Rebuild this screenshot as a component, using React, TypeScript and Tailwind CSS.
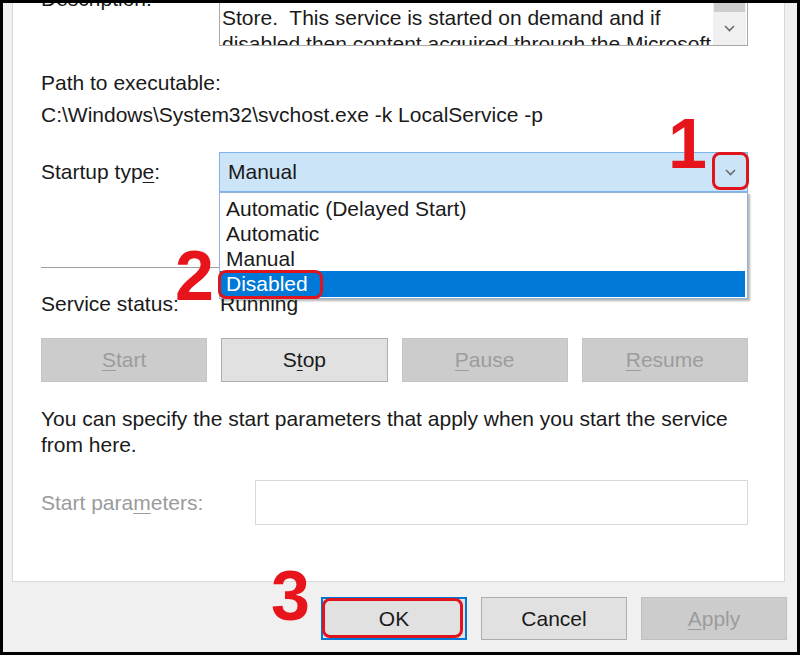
import React from 'react';

const Chevron = ({ className = '' }: { className?: string }) => (
  <svg width="11" height="7" viewBox="0 0 11 7" className={className}>
    <path d="M1 1 L5.5 5.5 L10 1" fill="none" stroke="#6b6b6b" strokeWidth="1.6" />
  </svg>
);

const Key = ({ children }: { children: React.ReactNode }) => (
  <span className="underline decoration-1 underline-offset-[3px]">{children}</span>
);

const SvcButton = ({ children, disabled }: { children: React.ReactNode; disabled?: boolean }) => (
  <div
    className={
      disabled
        ? 'h-[44px] flex items-center justify-center bg-[#cccccc] border border-[#c4c4c4] text-[#9c9c9c]'
        : 'h-[44px] flex items-center justify-center bg-[#e1e1e1] border border-[#adadad] text-[#1a1a1a]'
    }
  >
    {children}
  </div>
);

export default function App() {
  return (
    <div className="relative w-[800px] h-[655px] bg-black pt-[3px] pl-[3px] pr-[3px] pb-[3px] font-['Liberation_Sans',Arial,sans-serif] text-[21px] text-[#1a1a1a]">
      <div className="h-full bg-[#f0f0f0] flex flex-col">
        {/* Tab panel */}
        <div className="ml-[9px] mr-[12px] h-[579px] bg-white border-x border-b border-[#d9d9d9] overflow-hidden">
          <div className="pl-[28px] w-[735px]">
            {/* Description */}
            <div className="flex">
              <div className="w-[178px] mt-[-17px] leading-[26px]">Description:</div>
              <div className="w-[529px] h-[78px] mt-[-35px] border border-[#a8a8a8] flex">
                <div className="flex-1 pl-[2px] pt-[10px] leading-[26px] whitespace-nowrap overflow-hidden">
                  <div>Provides infrastructure support for the Microsoft</div>
                  <div>Store.&nbsp; This service is started on demand and if</div>
                  <div>disabled then content acquired through the Microsoft</div>
                </div>
                <div className="w-[33px] mr-[1px] flex flex-col bg-[#f0f0f0]">
                  <div className="flex-1 flex flex-col justify-end px-[1px]">
                    <div className="h-[14px] bg-[#cdcdcd]" />
                  </div>
                  <div className="h-[33px] flex items-center justify-center">
                    <Chevron />
                  </div>
                </div>
              </div>
            </div>

            {/* Path */}
            <div className="mt-[22px] leading-[29px]">Path to executable:</div>
            <div className="mt-[3px] leading-[29px] whitespace-nowrap">C:\Windows\System32\svchost.exe -k LocalService -p</div>

            {/* Startup type */}
            <div className="mt-[23px] flex items-center">
              <div className="w-[178px] leading-[26px]">
                Startup typ<Key>e</Key>:
              </div>
              <div className="relative w-[529px] h-[40px] bg-[#cce4f7] border border-[#7eb4ea] flex items-center">
                <div className="flex-1 pl-[8px] leading-[38px]">Manual</div>
                <div className="w-[34px] flex items-center justify-center">
                  <Chevron />
                </div>
                {/* open dropdown list */}
                <div className="absolute z-10 left-[-1px] top-[39px] w-[529px] h-[107px] bg-white border border-[#8fb3d9] pt-[3px] shadow-[2px_2px_2px_rgba(0,0,0,0.3)]">
                  <div className="h-[25px] leading-[25px] pl-[6px]">Automatic (Delayed Start)</div>
                  <div className="h-[25px] leading-[25px] pl-[6px]">Automatic</div>
                  <div className="h-[25px] leading-[25px] pl-[6px]">Manual</div>
                  <div className="h-[26px] leading-[26px] pl-[6px] mr-[2px] bg-[#0078d7] text-white">Disabled</div>
                </div>
              </div>
            </div>

            {/* separator */}
            <div className="mt-[75px] h-px bg-[#a0a0a0] w-[707px]" />

            {/* Service status */}
            <div className="mt-[23px] flex leading-[26px]">
              <div className="w-[179px]">Service status:</div>
              <div>Running</div>
            </div>

            {/* service buttons */}
            <div className="mt-[21px] w-[707px] grid grid-cols-4 gap-[14px]">
              <SvcButton disabled>
                <Key>S</Key>tart
              </SvcButton>
              <SvcButton>
                S<Key>t</Key>op
              </SvcButton>
              <SvcButton disabled>
                <Key>P</Key>ause
              </SvcButton>
              <SvcButton disabled>
                <Key>R</Key>esume
              </SvcButton>
            </div>

            <div className="mt-[24px] leading-[26px] w-[707px]">
              You can specify the start parameters that apply when you start the service from here.
            </div>

            {/* Start parameters */}
            <div className="mt-[22px] flex items-center">
              <div className="w-[214px] leading-[26px] text-[#9b9b9b]">
                Start para<Key>m</Key>eters:
              </div>
              <div className="w-[493px] h-[45px] border border-[#d9d9d9] bg-white" />
            </div>
          </div>
        </div>

        {/* Footer buttons */}
        <div className="flex-1 flex justify-end items-start pt-[15px] pr-[10px] gap-[14px]">
          <div className="w-[146px] h-[43px] flex items-center justify-center bg-[#e1e1e1] border-2 border-[#0078d7]">OK</div>
          <div className="w-[146px] h-[43px] flex items-center justify-center bg-[#e1e1e1] border border-[#adadad]">Cancel</div>
          <div className="w-[146px] h-[43px] flex items-center justify-center bg-[#cccccc] border border-[#bfbfbf] text-[#9c9c9c]">
            <Key>A</Key>pply
          </div>
        </div>
      </div>

      {/* Annotations */}
      <div className="absolute left-[668px] top-[109px] text-[70px] leading-none font-bold text-[#e8141b] z-20">1</div>
      <div className="absolute left-[175px] top-[241px] text-[70px] leading-none font-bold text-[#e8141b] z-20">2</div>
      <div className="absolute left-[271px] top-[561px] text-[70px] leading-none font-bold text-[#e8141b] z-20">3</div>
      <div className="absolute left-[712px] top-[152px] w-[37px] h-[38px] border-[3px] border-[#e0141c] rounded-[8px] z-20" />
      <div className="absolute left-[218px] top-[270px] w-[105px] h-[29px] border-[3px] border-[#e0141c] rounded-[8px] z-20" />
      <div className="absolute left-[322px] top-[598px] w-[141px] h-[40px] border-[3px] border-[#e0141c] rounded-[8px] z-20" />
    </div>
  );
}
